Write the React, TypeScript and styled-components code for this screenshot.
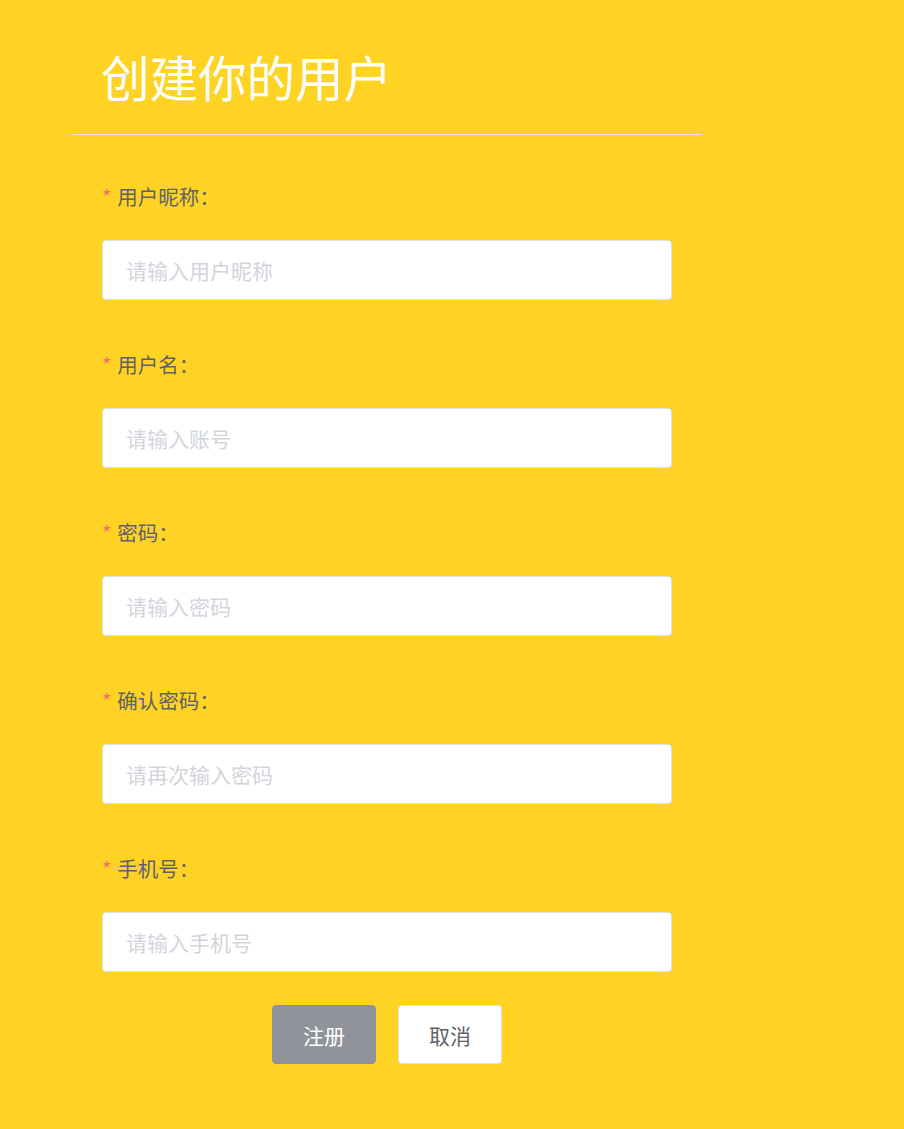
import React from "react";
import styled, { createGlobalStyle } from "styled-components";

const Global = createGlobalStyle`
  html, body { margin: 0; padding: 0; background: #FFD324; }
  body { font-family: "Noto Sans CJK SC", "Noto Sans", sans-serif; min-height: 1129px; }
  * { box-sizing: border-box; }
`;

const Page = styled.div`
  padding-left: 72px;
  padding-bottom: 66px;
  width: 702px;
`;

const Header = styled.div`
  padding: 40px 0 22px 29px;
  border-bottom: 1px solid #e4e4e4;
`;

const Title = styled.h1`
  margin: 0;
  font-size: 48.5px;
  line-height: 72px;
  font-weight: 400;
  color: #ffffff;
`;

const Form = styled.form`
  margin: 41px 0 0 30px;
  width: 570px;
  display: flex;
  flex-direction: column;
  gap: 33px;
`;

const Fields = styled.div`
  display: flex;
  flex-direction: column;
  gap: 44px;
`;

const Item = styled.div`
  display: flex;
  flex-direction: column;
  gap: 24px;
`;

const Label = styled.label`
  display: flex;
  align-items: center;
  height: 40px;
  font-size: 20.5px;
  color: #606266;
`;

const Star = styled.span`
  color: #f56c6c;
  margin-right: 6px;
  font-size: 20px;
`;

const Input = styled.input`
  height: 60px;
  width: 100%;
  border: 1px solid #dcdfe6;
  border-radius: 4px;
  background: #fff;
  padding: 0 23px;
  font-family: inherit;
  font-size: 21px;
  color: #606266;
  outline: none;
  &::placeholder { color: #d2d5db; }
`;

const Actions = styled.div`
  display: flex;
  justify-content: center;
  gap: 22px;
`;

const Button = styled.button<{ $primary?: boolean }>`
  width: 104px;
  height: 59px;
  border-radius: 4px;
  font-family: inherit;
  font-size: 21px;
  cursor: pointer;
  border: 1px solid ${(p) => (p.$primary ? "#909399" : "#dcdfe6")};
  background: ${(p) => (p.$primary ? "#909399" : "#ffffff")};
  color: ${(p) => (p.$primary ? "#ffffff" : "#606266")};
`;

const fields = [
  { label: "用户昵称", placeholder: "请输入用户昵称", type: "text" },
  { label: "用户名", placeholder: "请输入账号", type: "text" },
  { label: "密码", placeholder: "请输入密码", type: "password" },
  { label: "确认密码", placeholder: "请再次输入密码", type: "password" },
  { label: "手机号", placeholder: "请输入手机号", type: "text" },
];

export default function App() {
  return (
    <>
      <Global />
      <Page>
        <Header>
          <Title>创建你的用户</Title>
        </Header>
        <Form onSubmit={(e) => e.preventDefault()}>
          <Fields>
            {fields.map((f) => (
              <Item key={f.label}>
                <Label>
                  <Star>*</Star>
                  {f.label}：
                </Label>
                <Input type={f.type} placeholder={f.placeholder} />
              </Item>
            ))}
          </Fields>
          <Actions>
            <Button type="submit" $primary>注册</Button>
            <Button type="button">取消</Button>
          </Actions>
        </Form>
      </Page>
    </>
  );
}
